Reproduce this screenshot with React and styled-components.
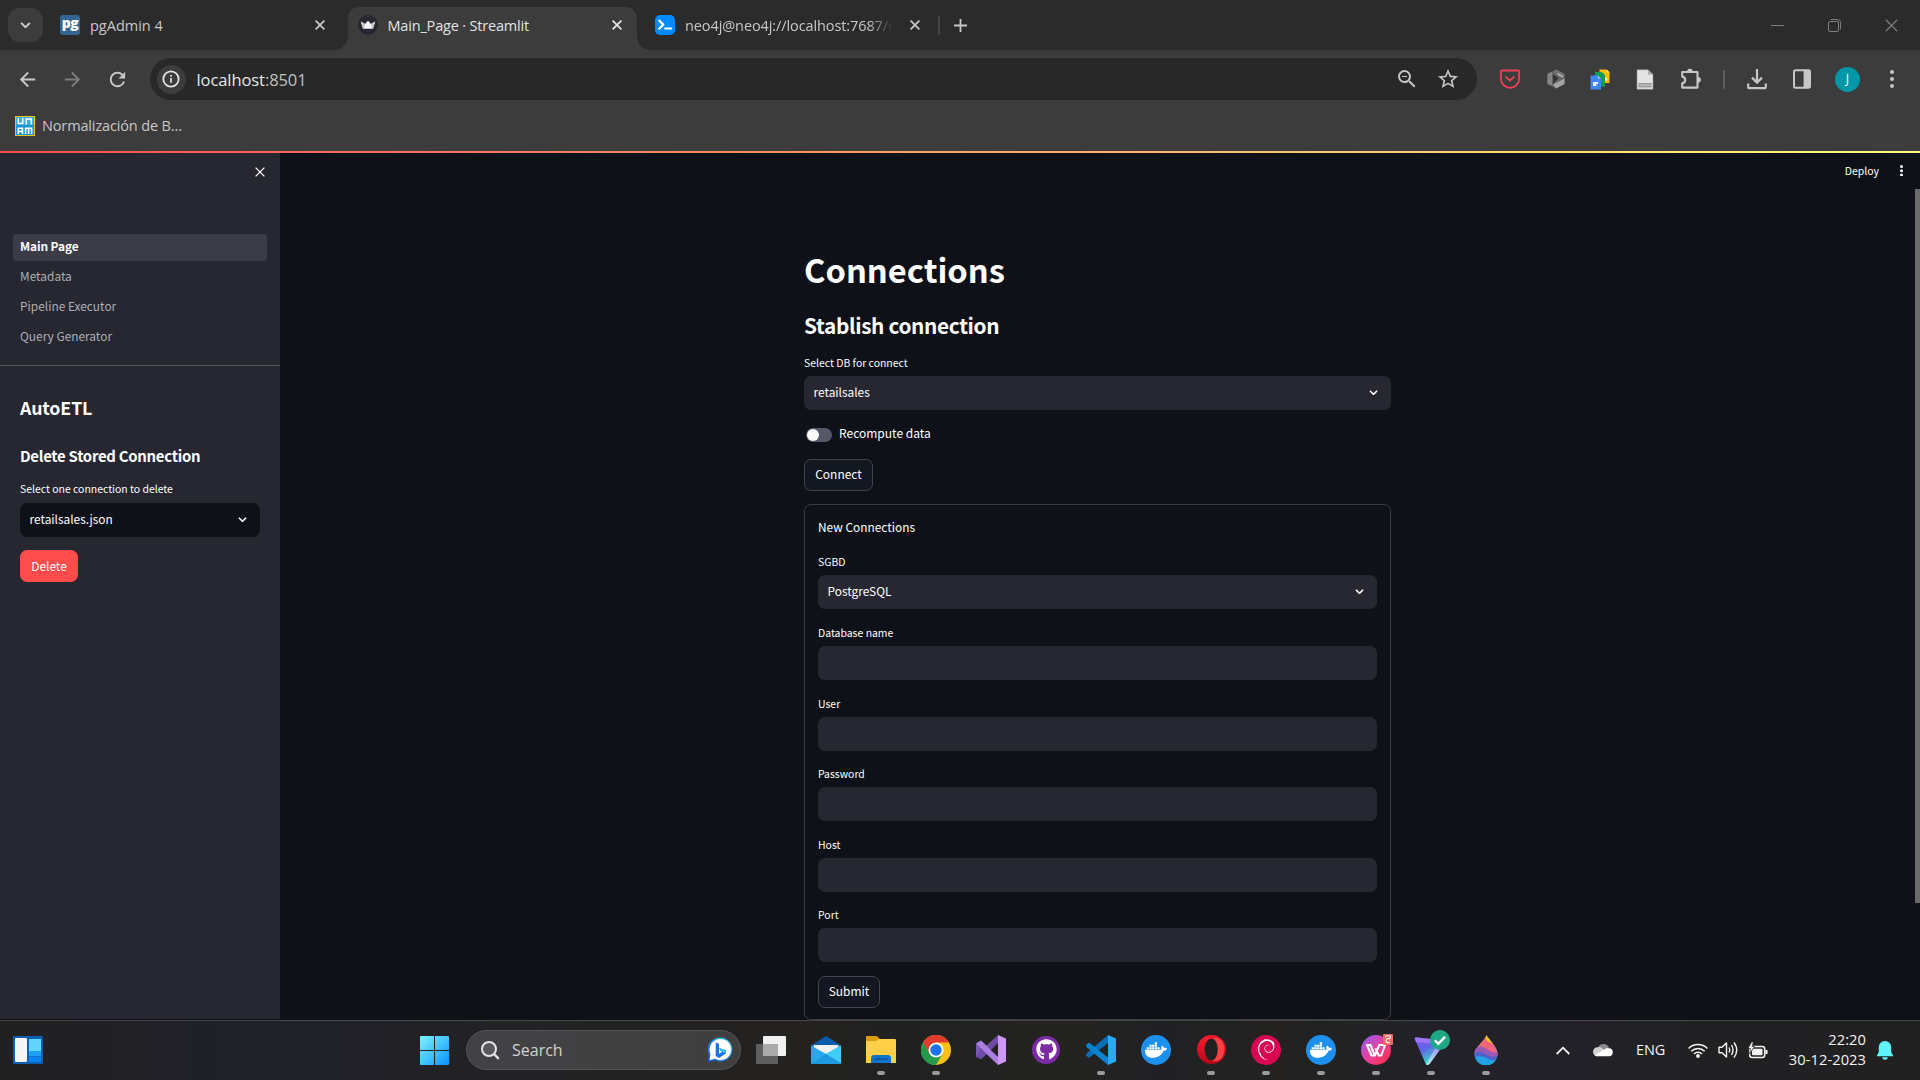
import React from "react";
import styled, { createGlobalStyle, css } from "styled-components";
import { MdArrowBack, MdArrowForward, MdRefresh, MdStarBorder, MdZoomOut } from "react-icons/md";
import { FaDocker, FaGithub } from "react-icons/fa";
import { SiDebian } from "react-icons/si";

const UI = `"Open Sans", "Noto Sans", sans-serif`;
const BODY = `"Noto Sans CJK SC", "Noto Sans", sans-serif`;

const GlobalStyle = createGlobalStyle`
  * { box-sizing: border-box; }
  body { margin: 0; background: #0e1117; overflow: hidden; }
  svg { display: block; flex: none; }
`;

const Screen = styled.div`
  width: 1920px;
  height: 1080px;
  display: flex;
  flex-direction: column;
  overflow: hidden;
  background: #0e1117;
`;

/* ---------- browser chrome ---------- */

const TabStrip = styled.header`
  height: 50px;
  flex: none;
  display: flex;
  align-items: center;
  background: #2b2b2b;
  color: #c8c8c8;
`;

const TabSearch = styled.div`
  width: 35px;
  height: 34px;
  margin-left: 8px;
  border-radius: 12px;
  background: #3c3c3c;
  display: grid;
  place-items: center;
`;

const Tab = styled.div`
  position: relative;
  width: ${(p) => p.$w}px;
  height: 43px;
  margin-top: 7px;
  padding: 0 ${(p) => p.$pr || 15}px 7px ${(p) => p.$pl}px;
  display: flex;
  align-items: center;
  gap: 10px;
  color: #c7c7c7;
  ${(p) =>
    p.$active &&
    css`
      background: #3c3c3c;
      color: #e3e3e3;
      border-radius: 11px 11px 0 0;
      &::before,
      &::after {
        content: "";
        position: absolute;
        bottom: 0;
        width: 13px;
        height: 13px;
      }
      &::before {
        left: -13px;
        background: radial-gradient(circle at 0 0, transparent 12.5px, #3c3c3c 13px);
      }
      &::after {
        right: -13px;
        background: radial-gradient(circle at 100% 0, transparent 12.5px, #3c3c3c 13px);
      }
    `}
`;

const TabTitle = styled.span`
  flex: 1;
  min-width: 0;
  white-space: nowrap;
  padding-top: 1px;
  font: 400 14.5px/20px ${UI};
  letter-spacing: ${(p) => p.$ls || 0}px;
  ${(p) =>
    p.$fade &&
    css`
      flex: 0 0 208px;
      margin-right: 7px;
      mask-image: linear-gradient(90deg, #000 88%, transparent 100%);
    `}
`;

const Rule = styled.i`
  width: 2px;
  height: 19px;
  border-radius: 1px;
  background: ${(p) => p.$c};
`;

const NewTab = styled.div`
  margin-left: 14px;
`;

const WindowControls = styled.div`
  margin-left: auto;
  padding-right: 22px;
  display: flex;
  align-items: center;
  gap: 44px;
  color: #7e7e7e;
`;

const Toolbar = styled.div`
  height: 58px;
  flex: none;
  display: flex;
  align-items: center;
  background: #3c3c3c;
  padding-left: 16px;
  color: #c7c7c7;
`;

const NavIcons = styled.div`
  display: flex;
  align-items: center;
  gap: 22px;
  width: 134px;
`;

const Dim = styled.span`
  color: #7c7c7c;
`;

const AddressBar = styled.div`
  width: 1327px;
  height: 42px;
  padding: 0 17px 0 6.5px;
  border-radius: 21px;
  background: #282828;
  display: flex;
  align-items: center;
  gap: 11px;
`;

const InfoBadge = styled.div`
  width: 29px;
  height: 29px;
  border-radius: 50%;
  background: #3c3c3c;
  display: grid;
  place-items: center;
`;

const Url = styled.span`
  flex: 1;
  padding-top: 1px;
  font: 400 16.5px/24px ${UI};
  letter-spacing: -0.08px;
  color: #e6e6e6;
  span { color: #c0c0c0; }
`;

const AddressActions = styled.div`
  display: flex;
  gap: 17px;
`;

const Extensions = styled.div`
  flex: 1;
  display: grid;
  grid-template-columns: 46px 46px 42px 48px 44px 22px 44px 46px 45px 44px;
  justify-items: center;
  align-items: center;
  padding-left: 10px;
`;

const Avatar = styled.div`
  width: 25px;
  height: 25px;
  border-radius: 50%;
  background: #0097a7;
  color: #fff;
  text-align: center;
  font: 400 12.5px/24px ${UI};
`;

const Bookmarks = styled.div`
  height: 43px;
  flex: none;
  background: #3c3c3c;
  padding: 0 0 7px 15px;
  display: flex;
  align-items: center;
  gap: 7px;
  font: 400 14.5px/20px ${UI};
  letter-spacing: -0.14px;
  color: #c7c7c7;
`;

const Decoration = styled.div`
  height: 2px;
  flex: none;
  background: linear-gradient(90deg, #ff4b4b, #fffd80);
`;

/* ---------- Streamlit page ---------- */

const Page = styled.div`
  height: 867px;
  flex: none;
  display: flex;
  overflow: hidden;
  font-family: ${BODY};
  color: #fff;
`;

const Sidebar = styled.aside`
  width: 280px;
  height: 866px;
  background: #262730;
  display: flex;
  flex-direction: column;
`;

const SidebarTop = styled.div`
  height: 81px;
  padding: 14px 15px 0 0;
  display: flex;
  justify-content: flex-end;
`;

const NavList = styled.nav`
  height: 132px;
  padding: 0 13px;
  display: flex;
  flex-direction: column;
  gap: 3px;
  border-bottom: 1px solid #51525a;
`;

const NavItem = styled.a`
  height: 27px;
  flex: none;
  padding-left: 7px;
  border-radius: 4px;
  font-size: 11.9px;
  line-height: 24px;
  color: ${(p) => (p.$active ? "#fafafa" : "#adaeb2")};
  font-weight: ${(p) => (p.$active ? 700 : 400)};
  letter-spacing: ${(p) => (p.$active ? -0.1 : 0)}px;
  background: ${(p) => (p.$active ? "#3c3c47" : "transparent")};
`;

const SidebarBody = styled.div`
  padding: 27px 20px 0;
  display: flex;
  flex-direction: column;
  align-items: flex-start;
`;

const Heading = styled.div`
  font-size: ${(p) => p.$size}px;
  line-height: ${(p) => p.$h}px;
  font-weight: 700;
  margin-bottom: ${(p) => p.$mb || 0}px;
  letter-spacing: ${(p) => p.$ls || 0}px;
  white-space: nowrap;
`;

const Label = styled.div`
  height: ${(p) => p.$h || 20}px;
  font-size: 10.45px;
  line-height: 13px;
  white-space: nowrap;
`;

const Field = styled.div`
  width: 100%;
  margin-bottom: ${(p) => p.$mb}px;
`;

const Box = styled.div`
  height: 34px;
  padding: 0 13px 1px 9.5px;
  border-radius: 7px;
  background: ${(p) => (p.$dark ? "#0e1117" : "#262730")};
  display: flex;
  align-items: center;
  justify-content: space-between;
  font-size: 11.9px;
  line-height: 18px;
`;

const BoxText = styled.span`
  padding-bottom: 1px;
`;

const Button = styled.button`
  height: 32px;
  width: ${(p) => p.$w}px;
  padding: 0 0 ${(p) => (p.$primary ? 0 : 2)}px;
  border: 1px solid ${(p) => (p.$primary ? "#ff4b4b" : "#41444c")};
  border-radius: 7px;
  background: ${(p) => (p.$primary ? "#ff4b4b" : "#131720")};
  color: #fff;
  font: 400 11.95px/18px ${BODY};
`;

const Main = styled.main`
  flex: 1;
  display: flex;
  justify-content: flex-end;
  align-items: flex-start;
`;

const Block = styled.section`
  width: 587px;
  padding-top: 92px;
  display: flex;
  flex-direction: column;
  align-items: flex-start;
`;

const ToggleRow = styled.label`
  height: 28px;
  margin-bottom: 11px;
  padding: 0 0 2px 2px;
  display: flex;
  align-items: center;
  gap: 7px;
  font-size: 12px;
  line-height: 18px;
`;

const Toggle = styled.span`
  width: 26px;
  height: 14px;
  margin-top: 4px;
  padding: 1px;
  border-radius: 7px;
  background: #555867;
  &::before {
    content: "";
    display: block;
    width: 12px;
    height: 12px;
    border-radius: 50%;
    background: #fafafa;
  }
`;

const Form = styled.form`
  width: 587px;
  height: 516px;
  flex: none;
  margin-top: 13px;
  padding: 13px;
  border: 1px solid #3a3c43;
  border-radius: 7px;
`;

const FormTitle = styled.div`
  height: 37px;
  font-size: 11.9px;
  line-height: 18px;
`;

const RightRail = styled.div`
  width: 529px;
  height: 866px;
  display: flex;
  flex-direction: column;
  align-items: flex-end;
`;

const PageMenu = styled.div`
  height: 36px;
  flex: none;
  padding: 0 17px 1px 0;
  display: flex;
  align-items: center;
  gap: 21px;
  font-size: 10.5px;
`;

const Scrollbar = styled.div`
  width: 5px;
  height: 714px;
  background: #6b6b6b;
`;

/* ---------- taskbar ---------- */

const Taskbar = styled.footer`
  height: 60px;
  flex: none;
  border-top: 1px solid #454547;
  background: linear-gradient(90deg, #212122 0, #20212a 270px, #222126 420px, #23221f 820px, #212123 900px, #242320 1070px, #212125 1160px, #232220 1270px, #222128 1440px, #232128 1560px, #212124 1700px, #212122 100%);
  display: flex;
  align-items: center;
  color: #f4f4f4;
`;

const WidgetSlot = styled.div`
  width: 420px;
  padding: 0 0 2px 13px;
`;

const SearchBox = styled.div`
  width: 275px;
  height: 40px;
  margin: 0 0 1px 17px;
  padding: 0 7px 0 14px;
  border: 1px solid #555457;
  border-radius: 20px;
  background: linear-gradient(90deg, #424145, #403f3e);
  display: flex;
  align-items: center;
  gap: 12px;
  font: 400 16px/22px ${UI};
  color: #d2d2d2;
  span { flex: 1; }
`;

const Apps = styled.div`
  display: flex;
  margin-left: 2.5px;
`;

const AppSlot = styled.div`
  position: relative;
  width: 55px;
  height: 58px;
  padding-bottom: 2px;
  display: grid;
  place-items: center;
  ${(p) =>
    p.$running &&
    css`
      &::after {
        content: "";
        position: absolute;
        left: 23.5px;
        bottom: 5px;
        width: 8px;
        height: 4px;
        border-radius: 2px;
        background: #9a9a9b;
      }
    `}
`;

const Disc = styled.span`
  width: ${(p) => p.$s || 30}px;
  height: ${(p) => p.$s || 30}px;
  border-radius: 50%;
  display: grid;
  place-items: center;
  color: #fff;
  background: ${(p) => p.$bg};
`;

const Tray = styled.div`
  margin-left: auto;
  padding: 0 27px 1px 0;
  display: flex;
  align-items: center;
`;

const TrayLeft = styled.div`
  display: flex;
  align-items: center;
  gap: 23px;
`;

const Lang = styled.span`
  width: 31px;
  margin-right: 21px;
  font: 400 14.5px/20px ${UI};
  letter-spacing: -0.1px;
`;

const Status = styled.div`
  display: flex;
  align-items: center;
  gap: 10px;
`;

const Clock = styled.div`
  width: 98px;
  margin-right: 11px;
  padding-bottom: 2px;
  text-align: right;
  font: 400 14.7px/20px ${UI};
  letter-spacing: 0.05px;
`;

/* ---------- icons ---------- */

const CloseX = ({ s = 10, w = 1.8 }) => (
  <svg width={s} height={s} viewBox="0 0 10 10" stroke="currentColor" strokeWidth={w}>
    <path d="M.6.6 9.4 9.4M9.4.6.6 9.4" />
  </svg>
);
const Chevron = ({ s = 9 }) => (
  <svg width={s} height={s * 0.6} viewBox="0 0 10 6" fill="none" stroke="currentColor" strokeWidth="1.8">
    <path d="M1 .8 5 4.8 9 .8" />
  </svg>
);
const Dots = ({ r, gap }) => (
  <svg width={r * 2} height={gap * 2 + r * 2} fill="currentColor">
    {[0, 1, 2].map((i) => (
      <circle key={i} cx={r} cy={r + gap * i} r={r} />
    ))}
  </svg>
);
const PgText = styled.span`
  width: 20px;
  height: 20px;
  flex: none;
  border-radius: 3px;
  background: #326690;
  color: #fff;
  text-align: center;
  font: 800 14px/15px "Open Sans", sans-serif;
  letter-spacing: -0.6px;
`;
const UnamIcon = () => (
  <svg width="20" height="20" viewBox="0 0 20 20" fill="none">
    <rect width="20" height="20" fill="#f0c419" />
    <rect x="1" y="1" width="18" height="18" fill="#1595d6" />
    <rect x="1" y="1" width="18" height="8" fill="#35a9e0" />
    <g stroke="#fff" strokeWidth="1.6">
      <path d="M3.3 2v5.5h4.4V2M11.3 8.4V3h5v5.4" />
      <path d="M3.3 18v-5.8h4.2V18M3.3 15.4h4.2M10.6 18v-5.8h6V18M13.6 12.2V18" />
    </g>
  </svg>
);
const Crown = () => (
  <svg width="20" height="20" viewBox="0 0 20 20">
    <circle cx="10" cy="10" r="10" fill="#262730" />
    <path d="M2.8 6.6 7 9 10 5.8 13 9l4.2-2.4-2 6.4c-.2.6-.6.8-1.2.8H6c-.6 0-1-.2-1.2-.8z" fill="#f6f6f6" />
    <path d="M2.8 6.6 7 9l-.6 4.8H6c-.6 0-1-.2-1.2-.8zM17.2 6.6 13 9l.6 4.8h.4c.6 0 1-.2 1.2-.8z" fill="#c9c9cd" />
  </svg>
);
const Terminal = () => (
  <svg width="20" height="20" viewBox="0 0 20 20" fill="none" stroke="#fff" strokeWidth="2.2">
    <rect width="20" height="20" rx="5" fill="#018bff" stroke="none" />
    <path d="m4.3 5.6 4 4-4 4" strokeLinejoin="round" strokeLinecap="round" />
    <path d="M10.2 13.5h6" strokeLinecap="round" />
  </svg>
);
const InfoIcon = () => (
  <svg width="18" height="18" viewBox="0 0 18 18" fill="none" stroke="#e3e3e3" strokeWidth="1.8">
    <circle cx="9" cy="9" r="7.7" />
    <path d="M9 8v4.8M9 5.1v1.6" strokeWidth="1.7" />
  </svg>
);
const Pocket = () => (
  <svg width="20" height="20" viewBox="0 0 20 20" fill="none" stroke="#ef4056" strokeWidth="1.8" strokeLinecap="round" strokeLinejoin="round">
    <path d="M2 1.5h16c.7 0 1.1.4 1.1 1.1v7.2A9.1 9.1 0 0 1 .9 9.8V2.6c0-.7.4-1.1 1.1-1.1z" />
    <path d="m6 8 4 3.7L14 8" />
  </svg>
);
const Cube = () => (
  <svg width="18" height="20" viewBox="0 0 18 20">
    <path d="M9 .5 17.5 5v10L9 19.500.5 15V5z" fill="#656565" />
    <path d="M.5 5 5 2.700v13.600L.5 15z" fill="#868686" />
    <path d="M9 .5 17.500 5v4.600L6 3.500z" fill="#727272" />
    <path d="M6 5.500 11.500 9 6 15z" fill="#333" />
    <path d="M6 15.500 17.500 9.500V15L9 19.500z" fill="#a4a4a4" />
    <path d="m10.500 3.800 5.500 3v2L10.500 6z" fill="#adadad" />
  </svg>
);
const DocsStack = () => (
  <svg width="20" height="21" viewBox="0 0 20 21">
    <path d="M9.5.5h7L19.5 3v11h-10z" fill="#fbbc04" />
    <path d="m16.5.5 3 3h-3z" fill="#fde293" />
    <path d="M14.5 8.5h2.5v3h-2.5z" fill="#fff3c8" />
    <path d="M5 3h6.5L15 6v11.5H5z" fill="#109d58" />
    <path d="M.5 6.5h7.3L11 9.6V20.5H.5z" fill="#4285f4" />
    <path d="M7.8 6.5 11 9.6H7.8z" fill="#a6c5fa" />
    <path d="M3 13.1h5.2v2H6.4v1.8H3z" fill="#e6effe" />
  </svg>
);
const PageIcon = () => (
  <svg width="18" height="21" viewBox="0 0 18 21">
    <path d="M1 .7h11L17 5.5v14.8H1z" fill="#e4e4e4" stroke="#8d8d8d" strokeWidth=".6" />
    <path d="M12 .7v4.8h5z" fill="#aaa" />
    <rect x="3" y="14.5" width="12" height="3.5" fill="#b3b3b3" stroke="#8c8c8c" strokeWidth=".8" />
  </svg>
);
const Puzzle = () => (
  <svg width="22" height="22" viewBox="0 0 22 22">
    <path d="M2.2 4h15.3v15.6H2.2v-4.400c4-.4 4-6.200 0-6.600z" fill="none" stroke="#c7c7c7" strokeWidth="2.1" strokeLinejoin="round" />
    <path d="M7.4 3.6a2.5 2.5 0 0 1 5 0zM18 9.3a2.5 2.5 0 0 1 0 5z" fill="#c7c7c7" stroke="#c7c7c7" />
  </svg>
);
const Download = () => (
  <svg width="20" height="21" viewBox="0 0 20 21" fill="none" stroke="#c7c7c7" strokeWidth="2.2">
    <path d="M10 0v13M5 8.6l5 5 5-5M1.2 14.5v3.2c0 .9.6 1.5 1.5 1.5h14.6c.9 0 1.5-.6 1.5-1.5v-3.2" />
  </svg>
);
const SidePanel = () => (
  <svg width="18" height="20" viewBox="0 0 18 20">
    <rect x="1" y="1.2" width="16" height="17.6" rx="1.5" fill="none" stroke="#c7c7c7" strokeWidth="2" />
    <path d="M10.6 1h6.4v18h-6.4z" fill="#c7c7c7" />
  </svg>
);
const WidgetsIcon = () => (
  <svg width="30" height="28" viewBox="0 0 30 28">
    <rect width="30" height="28" rx="1.5" fill="#0f5fb0" />
    <rect x="2" y="2" width="12" height="24" rx="1" fill="#f5f5f5" />
    <path d="M16 3h12v12H16z" fill="#62d4ff" />
    <path d="M16 15h12v5H16z" fill="#1fa0f8" />
    <path d="M16 20.5h12V26H16z" fill="#0a84ec" />
  </svg>
);
const StartIcon = () => (
  <svg width="29" height="29" viewBox="0 0 29 29">
    <defs>
      <linearGradient id="start" x1="0" y1="0" x2="29" y2="29" gradientUnits="userSpaceOnUse">
        <stop stopColor="#7df3ff" />
        <stop offset="1" stopColor="#0a93ff" />
      </linearGradient>
    </defs>
    <path d="M0 1q0-1 1-1h13v14H0zM15 0h13q1 0 1 1v13H15zM0 15h14v14H1q-1 0-1-1zM15 15h14v13q0 1-1 1H15z" fill="url(#start)" />
  </svg>
);
const SearchIcon = () => (
  <svg width="19" height="19" viewBox="0 0 19 19" fill="none" stroke="#e4e4e4" strokeWidth="2">
    <circle cx="8" cy="8" r="7" fill="#57585b" />
    <path d="m13 13 4.8 4.8" strokeWidth="2.4" />
  </svg>
);
const Bing = () => (
  <svg width="26" height="26" viewBox="0 0 26 26">
    <defs>
      <linearGradient id="bing" x1="0" y1="1" x2="1" y2="0">
        <stop stopColor="#1b48d8" />
        <stop offset=".5" stopColor="#1a8ef0" />
        <stop offset="1" stopColor="#2fd0e8" />
      </linearGradient>
    </defs>
    <path d="M13.5.5a12 12 0 1 1-5 23L.5 25.3l1.2-8A12 12 0 0 1 13.500 .5z" fill="url(#bing)" />
    <path d="M13.5 2a10.600 10.600 0 1 1-5.200 19.800L2.500 23.300l.9-6.400A10.600 10.600 0 0 1 13.500 2z" fill="#fff" />
    <path d="m8.700 5.500 3.300 1.300v10l3.500-2-2.200-1-1-2.800 6.500 2.300v3.300L12 21l-3.300-2z" fill="#1b72e8" />
    <path d="m12.300 11 6.500 2.300v3.300l-3.300-1.800-2.200-1z" fill="#2fc4dc" />
  </svg>
);
const TaskView = () => (
  <svg width="30" height="28" viewBox="0 0 30 28">
    <rect y="8" width="22" height="20" rx="1" fill="#5f5f60" />
    <rect x="7" width="23" height="20" rx="1" fill="#f0f0f0" />
    <path d="M7 8h15v12H7z" fill="#ababab" />
  </svg>
);
const Mail = () => (
  <svg width="30" height="28" viewBox="0 0 30 28">
    <path d="M0 9.500 15 0l15 9.500V14H0z" fill="#0a5cab" />
    <path d="M2.500 9h25v10h-25z" fill="#f1f1f1" />
    <path d="M0 9.500 15 18l15-8.500V27q0 1-1 1H1q-1 0-1-1z" fill="#26a8ea" />
    <path d="M15 18 30 9.500V27z" fill="#41cdf8" />
    <path d="M0 28 15 18l15 10z" fill="#1c93dd" opacity=".75" />
  </svg>
);
const Folder = () => (
  <svg width="30" height="27" viewBox="0 0 30 27">
    <path d="M0 1q0-1 1-1h9q1 0 2 1l2 2.500V8H0z" fill="#dd9b06" />
    <path d="M0 5h10l3-2h16q1 0 1 1v23H0z" fill="#ffcf48" />
    <path d="M5 27v-5q0-3 3-3h14q3 0 3 3v5z" fill="#0e74c8" />
    <path d="M8.500 23h13" stroke="#0a4f92" strokeWidth="1.400" />
  </svg>
);
const Chrome = () => (
  <svg width="30" height="30" viewBox="0 0 30 30">
    <circle cx="15" cy="15" r="15" fill="#fbc116" />
    <path d="M2 7.500A15 15 0 0 0 15 30l6.500-11.300L15 15 8.500 18.700z" fill="#229a4a" />
    <path d="M2 7.500A15 15 0 0 1 28 7.500H15L8.500 18.700z" fill="#e33b2e" />
    <path d="M2 7.500 8.500 18.700 15 22.500 12 30A15 15 0 0 1 2 7.500z" fill="#229a4a" />
    <circle cx="15" cy="15" r="7.500" fill="#fff" />
    <circle cx="15" cy="15" r="5.700" fill="#1a73e8" />
  </svg>
);
const VisualStudio = () => (
  <svg width="30" height="30" viewBox="0 0 30 30">
    <path d="M0 8.500 5 5.500l6 5.500-11 12z" fill="#64479a" />
    <path d="M0 21.500 5 24.500 22 8V0L0 20z" fill="#6b4ba3" />
    <path d="M0 9v12.500l4-4v-5z" fill="#7a57b5" />
    <path d="M0 8.500 5 5.500 22 22v8L4 12.500z" fill="#ac7ee2" />
    <path d="m22 0 8 3.500v23L22 30z" fill="#ce97fb" />
  </svg>
);
const VsCode = () => (
  <svg width="30" height="30" viewBox="0 0 30 30">
    <path d="M0 20.500 3 23 22 8V0L1 18Q0 19 0 20.500z" fill="#0a6fb8" />
    <path d="M0 10 3 7.500l19 15V30L1 12.500Q0 11.500 0 10z" fill="#0a84d0" />
    <path d="m22 0 8 3.500v23L22 30z" fill="#2aaaf0" />
  </svg>
);
const Opera = () => (
  <svg width="29" height="29" viewBox="0 0 29 29">
    <defs>
      <linearGradient id="opera" x1="0" y1="0" x2="0" y2="1">
        <stop stopColor="#ff1b2d" />
        <stop offset="1" stopColor="#b3081a" />
      </linearGradient>
    </defs>
    <path d="M14.500 0a14.500 14.500 0 1 0 0 29 14.500 14.500 0 1 0 0-29zM14.500 3.500c4 0 6.300 5 6.300 11s-2.300 11-6.300 11-6.800-5-6.800-11 2.800-11 6.800-11z" fillRule="evenodd" fill="url(#opera)" />
    <path d="M14.500 3.500c4 0 6.300 5 6.300 11s-2.300 11-6.300 11c3.500 1.500 7 .5 9.800-2a14.500 14.500 0 0 0 0-18C21.500 3 18 2 14.500 3.500z" fill="#fb4144" />
  </svg>
);
const Wps = () => (
  <svg width="34" height="34" viewBox="0 0 34 34">
    <defs>
      <linearGradient id="wps" x1="0" y1="0" x2="1" y2="1">
        <stop stopColor="#8b5cff" />
        <stop offset=".5" stopColor="#e8409a" />
        <stop offset="1" stopColor="#ff2a3d" />
      </linearGradient>
    </defs>
    <circle cx="17" cy="17" r="15" fill="url(#wps)" />
    <path d="M8 12h3.500l4.300 10.500h-3.300zM15.800 22.500 20.300 12H26l-3.700 10.500h-2.600l-3-6.500" fill="none" stroke="#fff" strokeWidth="2.100" strokeLinejoin="round" strokeLinecap="round" />
    <rect x="24" y="1" width="10" height="11" rx="1" fill="#f26a66" />
    <path d="M26.500 4q0-1.200 1.500-1.200h2q1.500 0 1.500 1.300T30 5.800h-1.200q-1.800 0-1.800 1.700T28.500 9.700H31" fill="none" stroke="#fff" strokeWidth="1.100" />
  </svg>
);
const Proton = () => (
  <svg width="38" height="40" viewBox="0 0 38 40">
    <defs>
      <linearGradient id="pv1" x1="0" y1="0" x2=".5" y2="1">
        <stop stopColor="#8c5bf5" />
        <stop offset=".5" stopColor="#5d64e8" />
        <stop offset="1" stopColor="#3ce0c4" />
      </linearGradient>
      <linearGradient id="pv2" x1="1" y1="0" x2="0" y2="1">
        <stop stopColor="#a97bff" />
        <stop offset="1" stopColor="#a6f5e4" />
      </linearGradient>
    </defs>
    <path d="M3 9.500Q2 7 5 7.500L27 10 16.500 33.500Q15 36 13.500 33.500z" fill="url(#pv1)" />
    <path d="M3 9.500Q2 7 5 7.500l21 2.300-1 4.200L4 12z" fill="#9d76f6" />
    <path d="m26 13 4 4-12 16.500q-2 2.500-3.800 1z" fill="url(#pv2)" />
    <circle cx="28" cy="10" r="10" fill="#1ea885" />
    <path d="m22.800 10.300 3.500 3.500 6.700-7" fill="none" stroke="#fff" strokeWidth="2.400" />
  </svg>
);
const Drop = () => (
  <svg width="24" height="30" viewBox="0 0 24 30">
    <defs>
      <clipPath id="drop">
        <path d="M12.500 0C14 4 24 12 23.500 19a11.500 11.500 0 0 1-23 0C0 12 10 8 12.500 0z" />
      </clipPath>
    </defs>
    <g clipPath="url(#drop)">
      <path d="M0 0h24v30H0z" fill="#21a5e6" />
      <path d="M0 0h24v9H0z" fill="#fbc30c" />
      <path d="M0 0h11q0 6 5 7.500T24 12v9l-9-3.500Q8 14 0 17z" fill="#f0647c" />
      <path d="M0 14q7-5 13 0t11 3v5q-8 3-12-1T0 19z" fill="#9a5ab4" />
      <path d="M0 19q6-4 11 0t13 2v4q-8 1-12-2T0 22z" fill="#4c62cc" />
    </g>
  </svg>
);
const Cloud = () => (
  <svg width="20" height="14" viewBox="0 0 20 14">
    <path d="M5 4.500A6 6 0 0 1 16 4.500L11 9z" fill="#8d8d90" />
    <path d="M4.500 13.300A4.500 4.500 0 0 1 4.500 4.300Q8 3.300 11 7z" fill="#cfcfd0" />
    <path d="M1.500 12 13 5.500a4.200 4.200 0 0 1 3-.2 4 4 0 0 1-.5 8H4.500q-2 0-3-1.300z" fill="#fff" />
  </svg>
);
const TrayChevron = () => (
  <svg width="14" height="9" fill="none" stroke="#f4f4f4" strokeWidth="1.800">
    <path d="m.7 8 6.300-6.300L13.300 8" />
  </svg>
);
const Wifi = () => (
  <svg width="20" height="15" viewBox="0 0 20 15" fill="none" stroke="#f4f4f4" strokeWidth="1.500">
    <path d="M.6 5.500a13.300 13.300 0 0 1 18.800 0M3.300 8.300a9.500 9.500 0 0 1 13.400 0M6 11a5.600 5.600 0 0 1 8 0" />
    <circle cx="10" cy="13" r="1.900" fill="#f4f4f4" stroke="none" />
  </svg>
);
const Volume = () => (
  <svg width="20" height="18" viewBox="0 0 20 18" fill="none" stroke="#f4f4f4" strokeWidth="1.400" strokeLinejoin="round">
    <path d="M1 6.200h3L8.500 2v14L4 11.800H1zM11 6.500q1.500 2.500 0 5M13.500 4q3 5 0 10M16 1.500q5.500 7.500 0 15" />
  </svg>
);
const Battery = () => (
  <svg width="20" height="17" viewBox="0 0 20 17">
    <rect x="1.700" y="4.500" width="15" height="11" rx="2.500" fill="none" stroke="#f4f4f4" strokeWidth="1.500" />
    <rect x="4" y="6.700" width="10.500" height="6.600" rx="1" fill="#f4f4f4" />
    <path d="M17.500 8h2v4h-2z" fill="#f4f4f4" />
    <path d="M3.500 0 0 6.500h2.500L1.500 12 6.500 4.500H4L5.500 0z" fill="#f4f4f4" stroke="#222126" strokeWidth=".7" />
  </svg>
);
const Bell = () => (
  <svg width="16" height="19" viewBox="0 0 16 19" fill="#5ff3fb">
    <path d="M8 0a6 6 0 0 1 6.200 6v5L16 14.500v.7H0v-.7L1.800 11V6A6 6 0 0 1 8 0zM5.300 16.300h5.400a2.700 2.500 0 0 1-5.400 0z" />
  </svg>
);

const NAV = ["Main Page", "Metadata", "Pipeline Executor", "Query Generator"];
const INPUTS = [
  ["Database name", 17],
  ["User", 16],
  ["Password", 17],
  ["Host", 16],
  ["Port", 14],
];
const APPS = [
  [<TaskView />, false],
  [<Mail />, false],
  [<Folder />, true],
  [<Chrome />, true],
  [<VisualStudio />, false],
  [<Disc $s={28} $bg="#7b2ba3"><FaGithub size={21} /></Disc>, false],
  [<VsCode />, true],
  [<Disc $bg="#1d90ed"><FaDocker size={22} /></Disc>, false],
  [<Opera />, true],
  [<Disc $bg="#d70751"><SiDebian size={21} /></Disc>, true],
  [<Disc $bg="#1d90ed"><FaDocker size={22} /></Disc>, true],
  [<Wps />, true],
  [<Proton />, true],
  [<Drop />, true],
];

export default function App() {
  return (
    <Screen>
      <GlobalStyle />
      <TabStrip>
        <TabSearch><Chevron s={11} /></TabSearch>
        <Tab $w={305} $pl={17} $pr={23}>
          <PgText>pg</PgText>
          <TabTitle>pgAdmin 4</TabTitle>
          <CloseX />
        </Tab>
        <Tab $w={289} $pl={9.5} $active>
          <Crown />
          <TabTitle $ls={-0.18}>Main_Page · Streamlit</TabTitle>
          <CloseX />
        </Tab>
        <Tab $w={301} $pl={18}>
          <Terminal />
          <TabTitle $fade $ls={-0.1}>neo4j@neo4j://localhost:7687/n</TabTitle>
          <CloseX />
        </Tab>
        <Rule $c="#454545" />
        <NewTab>
          <svg width="13" height="13" stroke="currentColor" strokeWidth="1.800">
            <path d="M6.500 0v13M0 6.500h13" />
          </svg>
        </NewTab>
        <WindowControls>
          <svg width="13" height="13" stroke="currentColor"><path d="M0 6.500h13" /></svg>
          <svg width="13" height="13" fill="none" stroke="currentColor">
            <rect x=".5" y="2.500" width="10" height="10" rx="1.500" />
            <path d="M2.500.5h7a3 3 0 0 1 3 3v7" />
          </svg>
          <CloseX s={13} w={0.9} />
        </WindowControls>
      </TabStrip>
      <Toolbar>
        <NavIcons>
          <MdArrowBack size={23} />
          <Dim><MdArrowForward size={23} /></Dim>
          <MdRefresh size={23} />
        </NavIcons>
        <AddressBar>
          <InfoBadge><InfoIcon /></InfoBadge>
          <Url>localhost<span>:8501</span></Url>
          <AddressActions>
            <MdZoomOut size={24} />
            <MdStarBorder size={24} />
          </AddressActions>
        </AddressBar>
        <Extensions>
          <Pocket />
          <Cube />
          <DocsStack />
          <PageIcon />
          <Puzzle />
          <Rule $c="#5e5e5e" />
          <Download />
          <SidePanel />
          <Avatar>J</Avatar>
          <Dots r={2} gap={7} />
        </Extensions>
      </Toolbar>
      <Bookmarks>
        <UnamIcon />
        Normalización de B...
      </Bookmarks>
      <Decoration />

      <Page>
        <Sidebar>
          <SidebarTop><CloseX s={10} w={1.3} /></SidebarTop>
          <NavList>
            {NAV.map((n, i) => (
              <NavItem key={n} $active={i === 0}>{n}</NavItem>
            ))}
          </NavList>
          <SidebarBody>
            <Heading $size={17.8} $h={28} $mb={21} $ls={-0.15}>AutoETL</Heading>
            <Heading $size={14.9} $h={28} $mb={12} $ls={-0.27}>Delete Stored Connection</Heading>
            <Field $mb={13}>
              <Label $h={21}>Select one connection to delete</Label>
              <Box $dark><BoxText>retailsales.json</BoxText><Chevron /></Box>
            </Field>
            <Button $primary $w={58}>Delete</Button>
          </SidebarBody>
        </Sidebar>
        <Main>
          <Block>
            <Heading $size={32.7} $h={48} $mb={16}>Connections</Heading>
            <Heading $size={20.8} $h={32} $mb={15} $ls={-0.34}>Stablish connection</Heading>
            <Field $mb={10}>
              <Label>Select DB for connect</Label>
              <Box><BoxText>retailsales</BoxText><Chevron /></Box>
            </Field>
            <ToggleRow><Toggle />Recompute data</ToggleRow>
            <Button type="button" $w={69}>Connect</Button>
            <Form>
              <FormTitle>New Connections</FormTitle>
              <Field $mb={17}>
                <Label>SGBD</Label>
                <Box><BoxText>PostgreSQL</BoxText><Chevron /></Box>
              </Field>
              {INPUTS.map(([name, gap]) => (
                <Field key={name} $mb={gap}>
                  <Label>{name}</Label>
                  <Box />
                </Field>
              ))}
              <Button type="button" $w={62}>Submit</Button>
            </Form>
          </Block>
          <RightRail>
            <PageMenu>Deploy<Dots r={1.5} gap={4.3} /></PageMenu>
            <Scrollbar />
          </RightRail>
        </Main>
      </Page>

      <Taskbar>
        <WidgetSlot><WidgetsIcon /></WidgetSlot>
        <StartIcon />
        <SearchBox>
          <SearchIcon />
          <span>Search</span>
          <Bing />
        </SearchBox>
        <Apps>
          {APPS.map(([icon, running], i) => (
            <AppSlot key={i} $running={running}>{icon}</AppSlot>
          ))}
        </Apps>
        <Tray>
          <TrayLeft>
            <TrayChevron />
            <Cloud />
            <Lang>ENG</Lang>
          </TrayLeft>
          <Status><Wifi /><Volume /><Battery /></Status>
          <Clock>22:20<br />30-12-2023</Clock>
          <Bell />
        </Tray>
      </Taskbar>
    </Screen>
  );
}
